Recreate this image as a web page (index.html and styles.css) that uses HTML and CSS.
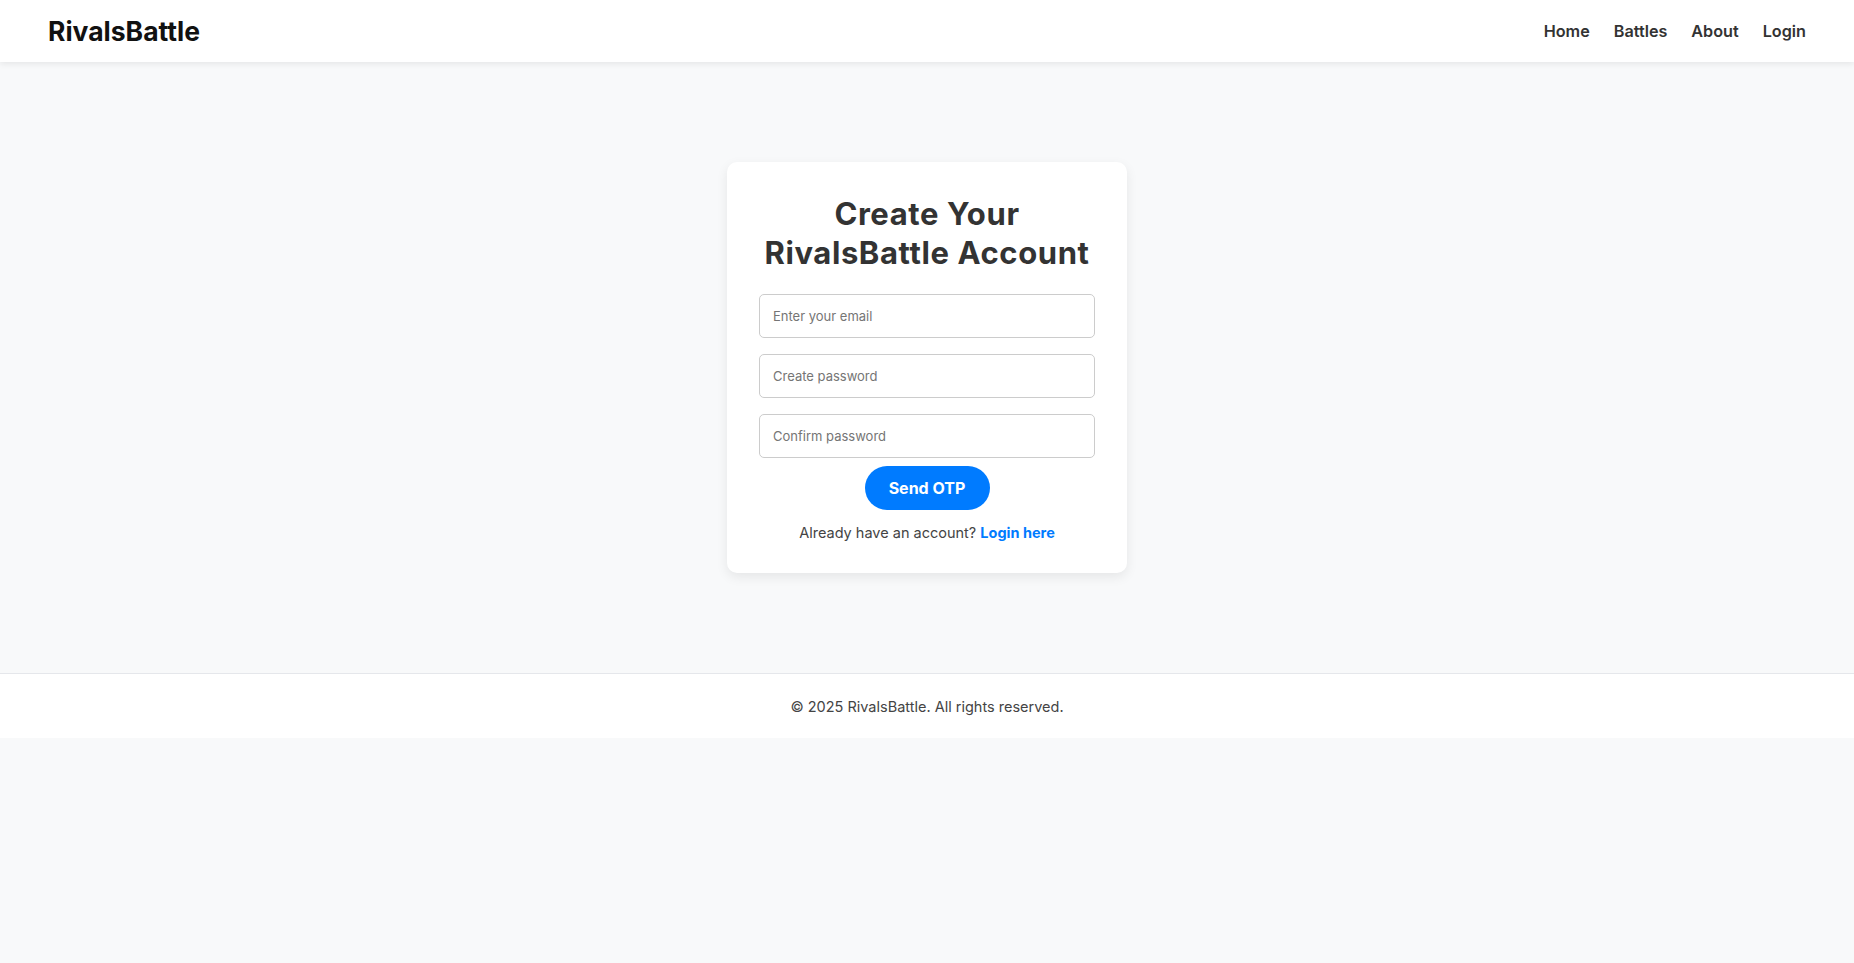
FILE: index.html
```html
<!DOCTYPE html>
<html lang="en">
<head>
<meta charset="utf-8">
<title>RivalsBattle - Sign Up</title>
<link rel="stylesheet" href="styles.css">
</head>
<body>
<header class="site-header">
  <a class="logo" href="#">RivalsBattle</a>
  <nav class="nav">
    <a href="#">Home</a>
    <a href="#">Battles</a>
    <a href="#">About</a>
    <a href="#">Login</a>
  </nav>
</header>
<main class="main">
  <div class="card">
    <h2 class="card-title">Create Your RivalsBattle Account</h2>
    <form class="form">
      <input class="field" type="email" placeholder="Enter your email">
      <input class="field" type="password" placeholder="Create password">
      <input class="field" type="password" placeholder="Confirm password">
      <button class="btn" type="button">Send OTP</button>
    </form>
    <p class="alt">Already have an account? <a href="#">Login here</a></p>
  </div>
</main>
<footer class="footer">
  <p>© 2025 RivalsBattle. All rights reserved.</p>
</footer>
</body>
</html>
```

FILE: styles.css
```css
* { box-sizing: border-box; }
html, body { margin: 0; padding: 0; }
body {
  background: #f8f9fa;
  font-family: Inter, "Noto Sans", sans-serif;
  color: #333;
}
a { text-decoration: none; }

.site-header {
  height: 62px;
  background: #fff;
  display: flex;
  align-items: center;
  justify-content: space-between;
  padding: 0 48px;
  box-shadow: 0 2px 6px rgba(0,0,0,0.08);
  position: relative;
}
.logo {
  font-size: 26.5px;
  font-weight: 700;
  color: #111;
}
.nav { display: flex; gap: 24px; }
.nav a {
  font-size: 16.2px;
  font-weight: 600;
  color: #333;
}

.main {
  display: flex;
  justify-content: center;
  padding: 100px 0 100px;
}
.card {
  width: 400px;
  background: #fff;
  border-radius: 10px;
  box-shadow: 0 4px 12px rgba(0,0,0,0.08);
  padding: 32px 32px 32px;
  text-align: center;
}
.card-title {
  margin: 0 0 14px;
  font-size: 31px;
  line-height: 39px;
  font-weight: 700;
  letter-spacing: 0.6px;
  color: #333;
}
.form { display: flex; flex-direction: column; align-items: center; }
.field {
  width: 100%;
  height: 44px;
  margin: 8px 0;
  border: 1px solid #ccc;
  border-radius: 5px;
  padding: 0 13px;
  font-family: inherit;
  font-size: 13px;
  color: #333;
}
.field::placeholder { color: #757575; }
.btn {
  margin-top: 0;
  width: 125px;
  height: 44px;
  border: none;
  border-radius: 22px;
  background: #007bff;
  color: #fff;
  font-family: inherit;
  font-size: 16px;
  font-weight: 700;
}
.alt {
  margin: 14px 0 0;
  font-size: 14.5px;
  color: #444;
}
.alt a { color: #007bff; font-weight: 700; }

.footer {
  background: #fff;
  border-top: 1px solid #e5e7eb;
  height: 65px;
  display: flex;
  align-items: center;
  justify-content: center;
}
.footer p { margin: 0; font-size: 14.5px; color: #444; }
```
